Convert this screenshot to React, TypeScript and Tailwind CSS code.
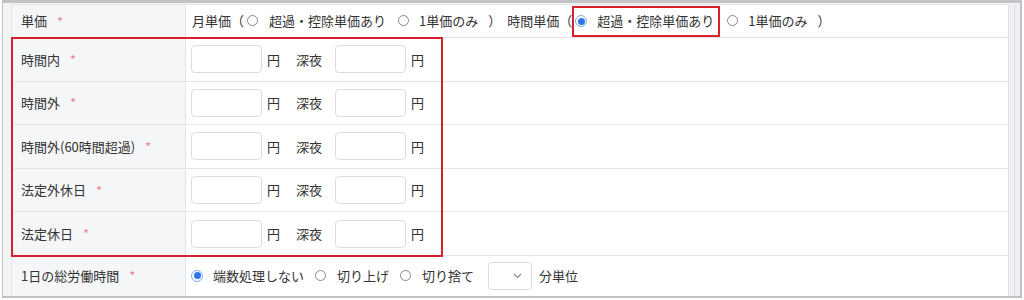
import React from 'react';

const FONT = { fontFamily: '"Noto Sans CJK JP", "Noto Sans", sans-serif' };

function Radio({ checked }: { checked?: boolean }) {
  if (checked) {
    return (
      <span className="inline-flex w-[12px] h-[12px] rounded-full border border-[#7fa9ec] bg-white items-center justify-center shrink-0">
        <span className="w-[7px] h-[7px] rounded-full bg-[#2f74e8]" />
      </span>
    );
  }
  return <span className="inline-block w-[11px] h-[11px] rounded-full border border-[#8a8a8a] bg-white shrink-0" />;
}

function Label({ text }: { text: string }) {
  return (
    <div className="w-[174px] shrink-0 bg-[#f5f6f8] border-r border-[#e2e4e8] flex items-center pl-[9px] text-[13px] text-[#333]">
      <span>{text}</span>
      <span className="ml-[10px] text-[13px] leading-none text-[#f08593]">*</span>
    </div>
  );
}

const RATE_ROWS = ['時間内', '時間外', '時間外(60時間超過)', '法定外休日', '法定休日'];

function RateRow({ label }: { label: string }) {
  return (
    <div className="h-[43.6px] flex border-b border-[#e2e4e8]">
      <Label text={label} />
      <div className="flex items-center pl-[5px] text-[13px] text-[#333]">
        <div className="w-[71px] h-[28px] border border-[#d9dce1] rounded-[4px] bg-white" />
        <span className="ml-[5px]">円</span>
        <span className="ml-[16px]">深夜</span>
        <div className="ml-[13px] w-[71px] h-[28px] border border-[#d9dce1] rounded-[4px] bg-white" />
        <span className="ml-[5px]">円</span>
      </div>
    </div>
  );
}

export default function App() {
  return (
    <div className="w-[1024px] h-[300px] bg-white pl-[2px] pr-[2px] pb-[2px]" style={FONT}>
      <div className="h-full border-2 border-t-[3px] border-[#c3c3c5] border-l-[1px] bg-[#f4f5f7] flex pl-[8px] pt-[1px]">
        {/* table */}
        <div className="flex-1 bg-white border-l border-t border-[#e2e4e8] flex flex-col">
          <div className="h-[33px] flex border-b border-[#e2e4e8]">
            <Label text="単価" />
            <div className="flex items-center pl-[6px] text-[13px] text-[#333] whitespace-nowrap">
              <span>月単価（</span>
              <span className="ml-[3px]"><Radio /></span>
              <span className="ml-[11px]">超過・控除単価あり</span>
              <span className="ml-[12px]"><Radio /></span>
              <span className="ml-[10px]">1単価のみ</span>
              <span className="ml-[10px]">）</span>
              <span className="ml-[6px]">時間単価（</span>
              <span className="h-[31px] border-2 border-[#d8202c] flex items-center pl-[1px] pr-[4px]">
                <Radio checked />
                <span className="ml-[10px]">超過・控除単価あり</span>
              </span>
              <span className="ml-[7px]"><Radio /></span>
              <span className="ml-[10px]">1単価のみ</span>
              <span className="ml-[10px]">）</span>
            </div>
          </div>

          <div className="relative">
            {RATE_ROWS.map((r) => (
              <RateRow key={r} label={r} />
            ))}
            {/* highlight overlay */}
            <div className="absolute left-[-1px] top-[-1px] w-[432px] h-[220px] border-2 border-[#d8202c] pointer-events-none" />
          </div>

          <div className="flex-1 flex">
            <Label text="1日の総労働時間" />
            <div className="flex items-center pl-[5px] text-[13px] text-[#333] whitespace-nowrap">
              <Radio checked />
              <span className="ml-[10px]">端数処理しない</span>
              <span className="ml-[11px]"><Radio /></span>
              <span className="ml-[11px]">切り上げ</span>
              <span className="ml-[11px]"><Radio /></span>
              <span className="ml-[11px]">切り捨て</span>
              <div className="ml-[14px] w-[44px] h-[28px] border border-[#d9dce1] rounded-[4px] bg-white flex items-center justify-end pr-[9px]">
                <svg width="9" height="6" viewBox="0 0 9 6" fill="none">
                  <path d="M1 1l3.5 3.5L8 1" stroke="#888" strokeWidth="1.1" />
                </svg>
              </div>
              <span className="ml-[7px]">分単位</span>
            </div>
          </div>
        </div>
        {/* right strip */}
        <div className="w-[12px] border-l border-[#e2e4e8] bg-[#eef0f4] flex">
          <div className="ml-[5px] w-px bg-[#e0e2e8]" />
        </div>
      </div>
    </div>
  );
}
